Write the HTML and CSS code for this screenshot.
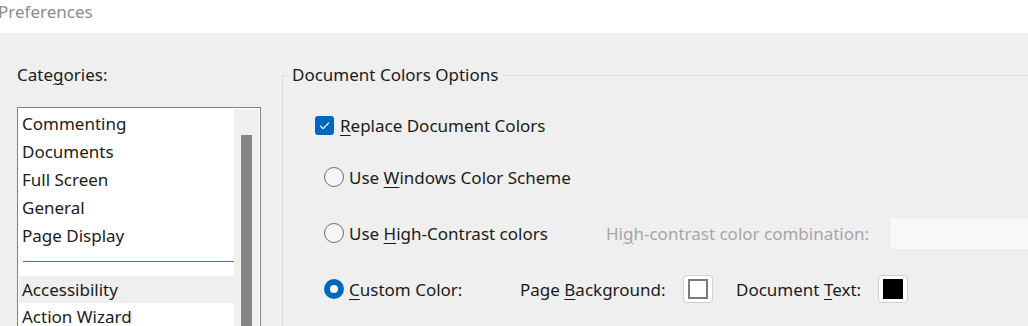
FILE: index.html
```html
<!DOCTYPE html>
<html>
    <head>
        <meta charset="utf-8">
        <title>Preferences</title>
        <link rel="stylesheet" href="styles.css">
    </head>
    <body>
        <div id="titlebar">
            <span class="title">Preferences</span>
        </div>

        <div id="main">
            <!-- left column: category list -->
            <div id="categories">
                <div class="cat-label">Cate<u>g</u>ories:</div>
                <div class="listbox">
                    <div class="items">
                        <div class="item">Commenting</div>
                        <div class="item">Documents</div>
                        <div class="item">Full Screen</div>
                        <div class="item">General</div>
                        <div class="item">Page Display</div>
                        <div class="sep"><div class="sep-line"></div></div>
                        <div class="item selected">Accessibility</div>
                        <div class="item">Action Wizard</div>
                    </div>
                    <div class="scrolltrack">
                        <div class="thumb"></div>
                    </div>
                </div>
            </div>

            <!-- right: document colors group -->
            <fieldset id="doccolors">
                <legend>Document Colors Options</legend>

                <div class="row check-row">
                    <span class="checkbox">
                        <svg width="19" height="19" viewBox="0 0 19 19"><path d="M5 9.6 L8.2 12.6 L14 6.6" fill="none" stroke="#fff" stroke-width="1.2"/></svg>
                    </span>
                    <span class="lbl"><u>R</u>eplace Document Colors</span>
                </div>

                <div class="row radio-row">
                    <span class="radio"></span>
                    <span class="lbl">Use <u>W</u>indows Color Scheme</span>
                </div>

                <div class="row radio-row">
                    <span class="radio"></span>
                    <span class="lbl w-hc">Use <u>H</u>igh-Contrast colors</span>
                    <span class="lbl disabled w-combo">Hi<u>g</u>h-contrast color combination:</span>
                    <span class="dropdown"></span>
                </div>

                <div class="row radio-row">
                    <span class="radio on"></span>
                    <span class="lbl w-custom"><u>C</u>ustom Color:</span>
                    <span class="lbl w-pagebg">Page <u>B</u>ackground:</span>
                    <span class="swatch"><span class="chip white"></span></span>
                    <span class="lbl w-doctext">Document <u>T</u>ext:</span>
                    <span class="swatch"><span class="chip black"></span></span>
                </div>
            </fieldset>
        </div>
    </body>
</html>
```

FILE: styles.css
```css
*{ padding: 0px; margin: 0px; box-sizing: border-box; }

html, body
{
    overflow: hidden;
    width: 100%;
    height: 100%;
    background: #efefef;
    font-family: "Noto Sans", "Open Sans", sans-serif;
    font-size: 17px;
    color: #1b1b1b;
}

u{ text-decoration-thickness: 1px; text-underline-offset: 3px; }

#titlebar
{
    height: 33px;
    background: #ffffff;
    line-height: 24px;
}
#titlebar .title
{
    display: inline-block;
    margin-left: -2px;
    color: #8d8d8d;
}

#main
{
    display: flex;
    height: 293px;
}

/* ---- left column ---- */
#categories
{
    width: 282px;
    flex: none;
    padding: 30px 0 0 17px;
}
.cat-label
{
    line-height: 24px;
    margin-bottom: 20px;
}
.listbox
{
    display: flex;
    width: 244px;
    height: 260px;
    background: #ffffff;
    border: 1px solid #828282;
    padding-top: 1px;
}
.items
{
    width: 216px;
    padding: 1px 0 0 1px;
}
.item
{
    height: 28px;
    line-height: 28px;
    padding-left: 3px;
    white-space: nowrap;
}
.item.selected{ background: #efefef; height: 27px; line-height: 27px; }
.sep
{
    height: 26px;
    padding: 11px 0 0 4px;
}
.sep-line
{
    height: 1px;
    background: #1f86ad;
}
.scrolltrack
{
    width: 25px;
    background: #f0f0f0;
    padding: 26px 0 0 7px;
}
.thumb
{
    width: 11px;
    height: 300px;
    background: #858585;
}

/* ---- right group ---- */
#doccolors
{
    flex: 1;
    border: none;
    border-top: 1px solid #dcdcdc;
    border-left: 1px solid #dcdcdc;
    margin-top: 31px;
    padding: 0;
    min-width: 0;
    overflow: hidden;
}
#doccolors legend
{
    margin-left: 5px;
    padding: 0 4px;
    line-height: 22px;
}

.row
{
    display: flex;
    align-items: center;
    height: 32px;
    white-space: nowrap;
}
.row > *{ flex: none; }
.check-row{ margin: 23px 0 0 32px; }
.radio-row{ margin: 20px 0 0 41px; }
.radio-row + .radio-row{ margin-top: 24px; }

.checkbox
{
    width: 19px;
    height: 19px;
    border-radius: 3px;
    background: #0067c0;
    margin-right: 6px;
    display: flex;
}
.radio
{
    width: 20px;
    height: 20px;
    border-radius: 50%;
    border: 1px solid #6b6b6b;
    background: #f6f6f6;
    margin-right: 5px;
}
.radio.on
{
    border: 6px solid #0067c0;
    background: #ffffff;
}

.lbl{ display: inline-block; }
.disabled{ color: #a6a6a6; }
.w-hc{ width: 257px; }
.w-combo{ width: 283px; }
.w-custom{ width: 171px; }
.w-pagebg{ width: 163px; }
.w-doctext{ width: 142px; }

.dropdown
{
    width: 160px;
    height: 33px;
    background: #f8f8f8;
    border: 1px solid #ececec;
    border-radius: 3px;
}

.swatch
{
    width: 30px;
    height: 28px;
    background: #ffffff;
    border: 1px solid #cfcfcf;
    border-radius: 4px;
    display: flex;
    align-items: center;
    justify-content: center;
    margin-right: 23px;
}
.chip
{
    width: 20px;
    height: 20px;
}
.chip.white{ background: #ffffff; border: 2px solid #7b7b7b; }
.chip.black{ background: #000000; }
```
